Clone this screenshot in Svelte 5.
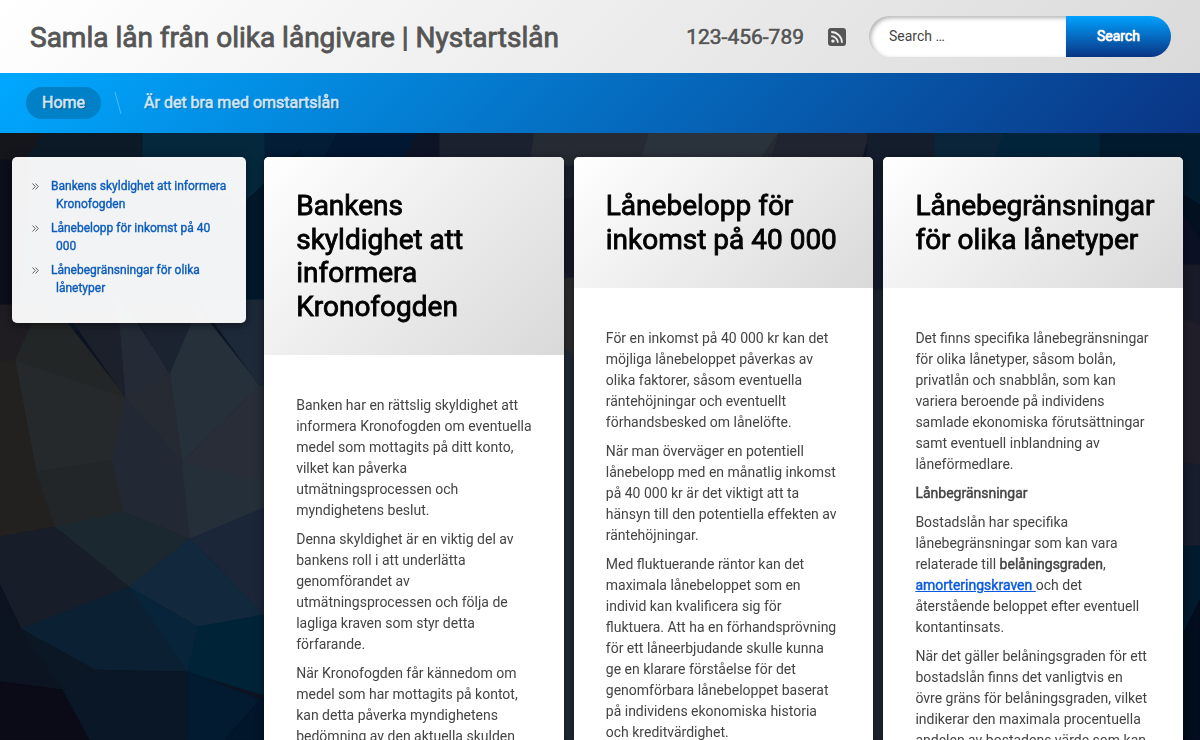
<script lang="ts">
  interface Menu {
    label: string;
    href: string;
    active: boolean;
  }

  const menu: Menu[] = [
    { label: 'Home', href: '#home', active: true },
    { label: 'Är det bra med omstartslån', href: '#omstartslan', active: false },
  ];

  const recent = [
    { title: 'Bankens skyldighet att informera Kronofogden', href: '#kronofogden' },
    { title: 'Lånebelopp för inkomst på 40 000', href: '#inkomst' },
    { title: 'Lånebegränsningar för olika lånetyper', href: '#lanetyper' },
  ];

  // low-poly backdrop facets: colour, points
  const facets = [
    ['#0c1a27', '0,130 270,130 270,330 0,330'],
    ['#15161b', '0,130 45,130 24,160 0,165'],
    ['#05283d', '143,130 300,130 262,210 143,165'],
    ['#021d35', '265,130 340,130 320,165 265,165'],
    ['#02182b', '247,200 300,150 300,310 240,310'],
    ['#021731', '340,130 420,130 400,165 320,165'],
    ['#0d1425', '420,130 445,130 445,165 400,165'],
    ['#0b0e1b', '0,160 30,160 20,305 0,305'],
    ['#1f1d22', '0,305 60,305 34,324 15,361 0,361'],
    ['#232626', '34,320 65,320 126,398 112,462 38,470 15,361'],
    ['#1b202b', '65,310 118,310 126,398'],
    ['#242b36', '118,300 135,320 170,374 126,398'],
    ['#1b2230', '125,300 200,300 170,374'],
    ['#25303b', '198,308 260,386 182,462 170,374'],
    ['#1d2839', '198,300 300,300 300,386 260,386'],
    ['#262b33', '170,374 182,462 126,398'],
    ['#26292b', '15,361 126,398 112,460 36,472'],
    ['#22211f', '0,361 15,361 36,472 55,527 0,537'],
    ['#222628', '36,472 112,460 124,512 55,527'],
    ['#232934', '126,398 182,462 190,539 124,512 112,460'],
    ['#282d38', '260,386 270,386 270,480 254,480 182,462'],
    ['#252f3a', '182,462 254,480 270,476 270,508 190,539'],
    ['#1c2830', '55,527 124,512 190,539 129,587'],
    ['#181d2a', '55,527 129,587 21,629 0,585 0,537'],
    ['#1b2639', '190,539 264,508 264,615'],
    ['#12283d', '190,539 264,615 198,627 129,587'],
    ['#0b2032', '129,587 188,672 95,670 21,629'],
    ['#08243a', '129,587 198,627 188,672'],
    ['#002338', '198,627 264,615 264,695 188,672'],
    ['#0c1422', '0,585 21,629 63,690 0,682'],
    ['#0c1725', '21,629 95,670 63,690'],
    ['#0a0b16', '0,682 63,690 90,740 0,740'],
    ['#091727', '63,690 95,670 188,672 188,740 90,740'],
    ['#021b30', '188,672 260,700 225,740 188,740'],
    ['#01152b', '260,700 300,670 300,740 225,740'],
    ['#1c2130', '440,130 600,130 600,300 540,280 440,165'],
    ['#252a33', '535,130 780,130 770,165 530,165'],
    ['#2a323b', '650,130 780,130 755,165 640,165'],
    ['#171b29', '560,200 590,195 590,290 560,270'],
    ['#2d2d2f', '560,280 590,275 590,370 560,345'],
    ['#202b37', '560,345 590,370 590,740 560,740'],
    ['#202430', '780,130 870,130 860,165 770,165'],
    ['#141d2c', '868,130 990,130 900,290 860,290'],
    ['#0a253a', '935,130 1005,130 990,170 935,170'],
    ['#02243a', '1005,130 1160,130 1130,170 990,170'],
    ['#202532', '865,290 890,290 890,740 865,740'],
    ['#021a2e', '1100,130 1200,130 1200,205 1100,180'],
    ['#021020', '1160,180 1200,205 1200,265 1160,290'],
    ['#0c1025', '1160,180 1200,240 1200,270 1160,270'],
    ['#191b28', '1160,265 1200,265 1200,340 1160,340'],
    ['#201e29', '1160,310 1200,325 1200,470 1160,460'],
    ['#161d2d', '1160,460 1200,465 1200,550 1160,550'],
    ['#021a2e', '1160,546 1200,546 1200,640 1160,700'],
    ['#020d1e', '1160,680 1200,600 1200,740 1160,740'],
  ];
</script>

<svelte:head>
  <title>Samla lån från olika långivare | Nystartslån</title>
</svelte:head>

<div class="page">
  <svg class="backdrop" viewBox="0 0 1200 740" preserveAspectRatio="xMidYMin slice" aria-hidden="true">
    {#each facets as [fill, points]}
      <polygon {fill} {points} stroke={fill} />
    {/each}
  </svg>

  <header class="site-header">
    <a class="site-title" href="#home">Samla lån från olika långivare | Nystartslån</a>
    <div class="tools">
      <span class="phone">123-456-789</span>
      <a class="rss" href="#feed" aria-label="RSS">
        <svg viewBox="0 0 18 18" width="18" height="18">
          <rect width="18" height="18" rx="3" fill="#555" />
          <circle cx="4.9" cy="13.1" r="1.7" fill="#eee" />
          <path d="M3.2 8.1a6.7 6.7 0 0 1 6.7 6.7M3.2 4a10.8 10.8 0 0 1 10.8 10.8" fill="none" stroke="#eee" stroke-width="1.8" />
        </svg>
      </a>
      <form class="search" onsubmit={(e) => e.preventDefault()}>
        <input type="search" placeholder="Search …" aria-label="Search for" />
        <button type="submit">Search</button>
      </form>
    </div>
  </header>

  <nav class="main-nav">
    {#each menu as item, i}
      {#if i > 0}
        <svg class="divider" viewBox="0 0 10 24" width="10" height="24" aria-hidden="true">
          <path d="M2 1L8 23" stroke="#fff" stroke-opacity="0.3" fill="none" />
        </svg>
      {/if}
      <a href={item.href} class:active={item.active}>{item.label}</a>
    {/each}
  </nav>

  <div class="content">
    <aside class="sidebar">
      <ul>
        {#each recent as post}
          <li>
            <svg viewBox="0 0 7 7" width="7" height="7" aria-hidden="true">
              <path d="M.5 .5L3.3 3.5L.5 6.5M3.5 .5L6.3 3.5L3.5 6.5" fill="none" stroke="#555" stroke-width=".9" />
            </svg>
            <a href={post.href}>{post.title}</a>
          </li>
        {/each}
      </ul>
    </aside>

    <main class="posts">
      <article>
        <header><h2>Bankens skyldighet att informera Kronofogden</h2></header>
        <div class="body">
          <p>Banken har en rättslig skyldighet att informera Kronofogden om eventuella medel som mottagits på ditt konto, vilket kan påverka utmätningsprocessen och myndighetens beslut.</p>
          <p>Denna skyldighet är en viktig del av bankens roll i att underlätta genomförandet av utmätningsprocessen och följa de lagliga kraven som styr detta förfarande.</p>
          <p>När Kronofogden får kännedom om medel som har mottagits på kontot, kan detta påverka myndighetens bedömning av den aktuella skulden</p>
        </div>
      </article>

      <article>
        <header><h2>Lånebelopp för inkomst på 40 000</h2></header>
        <div class="body">
          <p>För en inkomst på 40 000 kr kan det möjliga lånebeloppet påverkas av olika faktorer, såsom eventuella räntehöjningar och eventuellt förhandsbesked om lånelöfte.</p>
          <p>När man överväger en potentiell lånebelopp med en månatlig inkomst på 40 000 kr är det viktigt att ta hänsyn till den potentiella effekten av räntehöjningar.</p>
          <p>Med fluktuerande räntor kan det maximala lånebeloppet som en individ kan kvalificera sig för fluktuera. Att ha en förhandsprövning för ett låneerbjudande skulle kunna ge en klarare förståelse för det genomförbara lånebeloppet baserat på individens ekonomiska historia och kreditvärdighet.</p>
        </div>
      </article>

      <article>
        <header><h2>Lånebegränsningar för olika lånetyper</h2></header>
        <div class="body">
          <p>Det finns specifika lånebegränsningar för olika lånetyper, såsom bolån, privatlån och snabblån, som kan variera beroende på individens samlade ekonomiska förutsättningar samt eventuell inblandning av låneförmedlare.</p>
          <p><strong>Lånbegränsningar</strong></p>
          <p>Bostadslån har specifika lånebegränsningar som kan vara relaterade till <strong>belåningsgraden</strong>, <a href="#amortering"><strong>amorteringskraven&nbsp;</strong></a>och det återstående beloppet efter eventuell kontantinsats.</p>
          <p>När det gäller belåningsgraden för ett bostadslån finns det vanligtvis en övre gräns för belåningsgraden, vilket indikerar den maximala procentuella andelen av bostadens värde som kan</p>
        </div>
      </article>
    </main>
  </div>
</div>

<style>
  :global(body) {
    margin: 0;
    background: #0c1422;
  }

  .page {
    min-height: 100vh;
    font-family: Roboto, 'Liberation Sans', sans-serif;
    font-size: 14px;
    line-height: 21px;
    color: #444;
  }

  .backdrop {
    position: fixed;
    inset: 0;
    width: 100%;
    height: 100%;
  }

  .site-header,
  .main-nav,
  .content {
    position: relative;
    display: flex;
  }

  .site-header {
    align-items: center;
    justify-content: space-between;
    padding: 16px 29px 16px 30px;
    background: linear-gradient(135deg, #fff, #dadada);
  }

  /* regular weight thickened by a stroke, so widths stay those of the regular cut */
  .site-title,
  .phone,
  .search button,
  .main-nav a,
  .sidebar a,
  h2,
  strong {
    font-weight: 400;
    -webkit-text-stroke: 0.03em currentColor;
  }

  .site-title {
    padding-top: 2px;
    font-size: 28px;
    line-height: 39px;
    color: #555;
    text-decoration: none;
  }

  .tools {
    display: flex;
    align-items: center;
  }

  .phone {
    padding-top: 2px;
    font-size: 21px;
    color: #555;
    text-shadow: 1px 1px 1px #fff;
  }

  .rss {
    display: flex;
    margin: 0 23px 0 24px;
  }

  .search {
    display: flex;
    height: 41px;
  }

  .search input {
    box-sizing: border-box;
    width: 197px;
    padding: 0 20px;
    border: 0;
    border-radius: 21px 0 0 21px;
    background: #fff;
    box-shadow: inset 2px 2px 4px rgba(0, 0, 0, 0.3);
    font: inherit;
    color: #444;
    appearance: none;
  }

  .search input::placeholder {
    color: #444;
    opacity: 1;
  }

  .search button {
    width: 105px;
    padding: 0 0 2px;
    border: 0;
    border-radius: 0 21px 21px 0;
    background: linear-gradient(#00a2ff, #0a3484);
    font-family: inherit;
    font-size: 14px;
    color: #fff;
    text-shadow: 0 0 1px #fff;
    cursor: pointer;
  }

  .main-nav {
    align-items: center;
    padding: 14px 26px;
    background: linear-gradient(135deg, #00a8ff, #0a3484);
  }

  .main-nav a {
    padding: 0 16px;
    border-radius: 16px;
    font-size: 16px;
    line-height: 32px;
    color: #cfe5fb;
    text-decoration: none;
    text-shadow: 1px 1px 1px rgba(0, 0, 0, 0.4);
    -webkit-text-stroke: 0.04em currentColor;
  }

  .main-nav a.active {
    background: #0080c6;
  }

  .divider {
    margin: 0 5px 0 12px;
  }

  .content {
    align-items: flex-start;
    gap: 18px;
    padding: 24px 17px 0 12px;
  }

  .sidebar {
    flex: 0 0 20%;
    box-sizing: border-box;
    padding: 20px;
    border-radius: 5px;
    background: rgba(255, 255, 255, 0.95);
    box-shadow: 0 2px 8px rgba(0, 0, 0, 0.5);
    font-size: 12px;
    line-height: 18px;
  }

  .sidebar ul {
    margin: 0;
    padding: 0;
    list-style: none;
  }

  .sidebar li {
    display: flex;
    align-items: flex-start;
    gap: 12px;
    margin-bottom: 6px;
  }

  .sidebar li svg {
    flex: none;
    margin-top: 6px;
  }

  .sidebar a {
    padding-left: 5px;
    text-indent: -5px;
    color: #0d5cbc;
    text-decoration: none;
  }

  .posts {
    flex: 1;
    display: grid;
    grid-template-columns: repeat(3, minmax(0, 1fr));
    gap: 10px;
  }

  article {
    border-radius: 5px;
    background: #fff;
    box-shadow: 0 2px 8px rgba(0, 0, 0, 0.5);
    overflow: hidden;
  }

  article header {
    padding: 32px;
    background: linear-gradient(135deg, #fff, #d9d9d9);
  }

  h2 {
    margin: 0;
    font-size: 28px;
    line-height: 1.2;
    color: #000;
  }

  .body {
    padding: 40px 32px;
  }

  .body p {
    margin: 0 0 8px;
  }

  .body a {
    color: #0a5ae0;
  }
</style>
